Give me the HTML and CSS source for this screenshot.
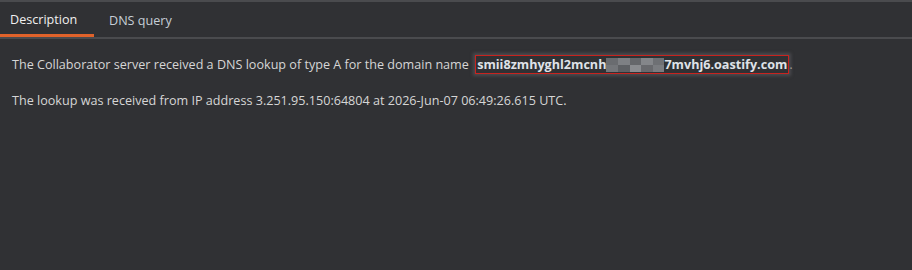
FILE: index.html
```html
<!DOCTYPE html>
<html>
<head>
<meta charset="utf-8">
<link rel="stylesheet" href="styles.css">
</head>
<body>
<div class="panel">
  <div class="tabs">
    <div class="tab active">Description</div>
    <div class="tab">DNS query</div>
  </div>
  <div class="content">
    <p class="line">The Collaborator server received a DNS lookup of type A for the domain name <span class="domain"><b>smii8zmhyghl2mcnh</b><span class="blur"><i class="b1"></i><i class="b2"></i><i class="b3"></i><i class="b4"></i><i class="b5"></i><i class="b6"></i><i class="b7"></i><i class="b8"></i><i class="b9"></i><i class="b10"></i></span><b>7mvhj6.oastify.com</b></span>.</p>
    <p class="line">The lookup was received from IP address 3.251.95.150:64804 at 2026-Jun-07 06:49:26.615 UTC.</p>
  </div>
</div>
</body>
</html>
```
FILE: styles.css
```css
html, body { margin: 0; padding: 0; }
body {
  width: 912px;
  height: 270px;
  background: #303134;
  font-family: "Open Sans", "Noto Sans", sans-serif;
  font-size: 12.6px;
  color: #d6d6d6;
  overflow: hidden;
}
.panel {
  border-top: 2px solid #4a4b4e;
}
.tabs {
  display: flex;
  height: 35px;
  border-bottom: 2px solid #4a4b4e;
}
.tab {
  display: flex;
  align-items: center;
  height: 35px;
  box-sizing: border-box;
  color: #c6ced6;
  font-size: 12.6px;
  padding-top: 2px;
}
.tab:first-child { width: 94px; padding-left: 10px; }
.tab:nth-child(2) { padding-left: 15px; }
.tab.active {
  color: #f0f0f0;
  border-bottom: 3px solid #e0622a;
  padding-top: 3px;
}
.content {
  padding: 0 12px;
}
.line {
  margin: 0;
  line-height: 20px;
}
.line:first-child { margin-top: 16px; }
.line + .line { margin-top: 16px; }
.domain {
  display: inline-flex;
  align-items: center;
  border: 1px solid #c8231f;
  padding: 0 1px;
  height: 17px;
  box-shadow: 0 0 3px 2px rgba(78,78,82,0.9);
  vertical-align: middle;
  position: relative;
  top: -1px;
  margin-left: 3px;
}
.domain b { font-weight: 700; color: #dfe2e8; }
.blur { display: inline-grid; grid-template-columns: repeat(5, 1fr); height: 14px; width: 58px; }
.blur i { display: block; }
.b1 { background: #6a6c70; }
.b2 { background: #7e8084; }
.b3 { background: #65676b; }
.b4 { background: #84868a; }
.b5 { background: #6e7074; }
.b6 { background: #74767a; }
.b7 { background: #5e6064; }
.b8 { background: #8a8c90; }
.b9 { background: #68696d; }
.b10 { background: #7a7c80; }
```
